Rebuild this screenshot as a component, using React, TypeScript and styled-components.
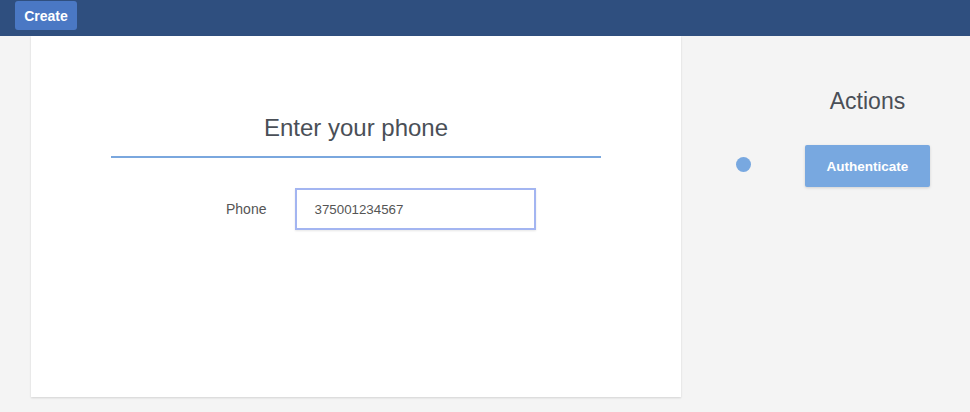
import React from "react";
import styled, { createGlobalStyle } from "styled-components";

const Global = createGlobalStyle`
  html, body { margin: 0; padding: 0; background: #f4f4f4; }
  body { font-family: "Liberation Sans", Arial, sans-serif; }
  * { box-sizing: border-box; }
`;

const Page = styled.div`
  width: 970px;
  height: 412px;
  background: #f4f4f4;
  display: flex;
  flex-direction: column;
  overflow: hidden;
`;

const TopBar = styled.header`
  height: 36px;
  background: #2f4f7f;
  padding: 1px 15px 0;
  display: flex;
  align-items: flex-start;
  flex-shrink: 0;
`;

const CreateButton = styled.button`
  height: 29px;
  width: 62px;
  border: none;
  border-radius: 3px;
  background: #4a78c4;
  color: #fff;
  font-family: "Liberation Sans", Arial, sans-serif;
  font-weight: bold;
  font-size: 14px;
  padding: 0;
  cursor: pointer;
`;

const Body = styled.div`
  flex: 1;
  display: flex;
  padding-left: 31px;
`;

const Card = styled.section`
  width: 650px;
  height: 361px;
  background: #fff;
  box-shadow: 0 1px 2px rgba(0, 0, 0, 0.14);
  display: flex;
  flex-direction: column;
  align-items: center;
  padding-top: 78px;
`;

const Title = styled.h2`
  margin: 0;
  width: 490px;
  text-align: center;
  font-weight: normal;
  font-size: 24px;
  color: #4a4f57;
  padding-bottom: 14px;
  border-bottom: 2px solid #7aa7de;
  line-height: 28px;
`;

const FieldRow = styled.div`
  margin-top: 30px;
  display: flex;
  align-items: center;
  gap: 29px;
  align-self: flex-start;
  margin-left: 195px;
`;

const Label = styled.label`
  font-size: 14px;
  color: #555;
`;

const PhoneInput = styled.input`
  width: 241px;
  height: 42px;
  border: 2px solid #a3b5f1;
  padding: 0 17px;
  font-family: "Liberation Sans", Arial, sans-serif;
  font-size: 13.33px;
  color: #555;
  outline: none;
  box-shadow: 0 1px 2px rgba(0, 0, 0, 0.1);
`;

const Side = styled.aside`
  flex: 1;
  display: flex;
  flex-direction: column;
  padding-top: 52px;
  padding-left: 124px;
`;

const SideTitle = styled.h3`
  margin: 0;
  width: 125px;
  text-align: center;
  font-weight: normal;
  font-size: 23px;
  color: #4a4f57;
  line-height: 26px;
`;

const ActionRow = styled.div`
  margin-top: 31px;
  display: flex;
  align-items: flex-start;
  margin-left: -69px;
  gap: 54px;
`;

const Dot = styled.span`
  width: 15px;
  height: 15px;
  margin-top: 12px;
  border-radius: 50%;
  background: #78a8e0;
  display: block;
`;

const ActionButton = styled.button`
  width: 125px;
  height: 42px;
  border: none;
  border-radius: 2px;
  background: #78a8e0;
  color: #fff;
  font-family: "Liberation Sans", Arial, sans-serif;
  font-weight: bold;
  font-size: 13.5px;
  box-shadow: 0 1px 3px rgba(0, 0, 0, 0.15);
  cursor: pointer;
`;

export default function App() {
  return (
    <>
      <Global />
      <Page>
        <TopBar>
          <CreateButton>Create</CreateButton>
        </TopBar>
        <Body>
          <Card>
            <Title>Enter your phone</Title>
            <FieldRow>
              <Label htmlFor="phone">Phone</Label>
              <PhoneInput id="phone" defaultValue="375001234567" />
            </FieldRow>
          </Card>
          <Side>
            <SideTitle>Actions</SideTitle>
            <ActionRow>
              <Dot />
              <ActionButton>Authenticate</ActionButton>
            </ActionRow>
          </Side>
        </Body>
      </Page>
    </>
  );
}
